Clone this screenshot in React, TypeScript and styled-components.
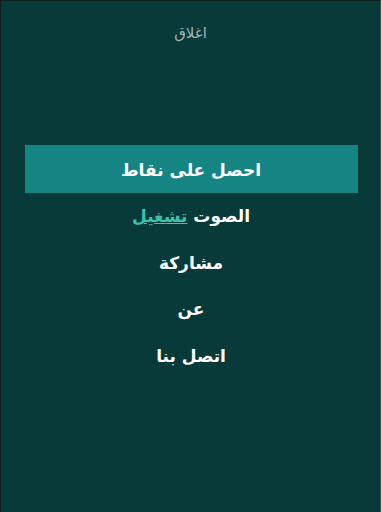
import styled, {createGlobalStyle} from "styled-components";

const GlobalStyle = createGlobalStyle`
    html, body {
        margin: 0;
        padding: 0;
        background: #083a3a;
    }
    body {
        font-family: "DejaVu Sans", sans-serif;
    }
`

const Screen = styled.div`
    box-sizing: border-box;
    width: 381px;
    height: 512px;
    background: #083a3a;
    border-top: 1px solid #10201f;
    border-left: 1px solid #10201f;
    border-right: 1px solid #3b4d4c;
    direction: rtl;
    display: flex;
    flex-direction: column;
    align-items: center;
`

const CloseButton = styled.button`
    margin-top: 23px;
    background: none;
    border: none;
    padding: 0;
    color: #9fb3b1;
    font-family: "DejaVu Sans", sans-serif;
    font-size: 15px;
    cursor: pointer;
`

const Menu = styled.nav`
    margin-top: 103px;
    width: 333px;
    margin-left: 1px;
    display: flex;
    flex-direction: column;
`

const MenuItem = styled.a<{ $active?: boolean }>`
    height: ${p => p.$active ? "48px" : "46.5px"};
    display: flex;
    align-items: center;
    justify-content: center;
    background: ${p => p.$active ? "#148583" : "transparent"};
    color: #ffffff;
    font-size: 17px;
    font-weight: bold;
    text-decoration: none;
    padding-top: ${p => p.$active ? "1px" : "0"};
    box-sizing: border-box;
`

const Toggle = styled.span`
    color: #3cc2ab;
    text-decoration: underline;
    margin-right: 6px;
`

export default function App() {
    return (
        <>
            <GlobalStyle/>
            <Screen>
                <CloseButton>اغلاق</CloseButton>
                <Menu>
                    <MenuItem $active>احصل على نقاط</MenuItem>
                    <MenuItem>الصوت<Toggle>تشغيل</Toggle></MenuItem>
                    <MenuItem>مشاركة</MenuItem>
                    <MenuItem>عن</MenuItem>
                    <MenuItem>اتصل بنا</MenuItem>
                </Menu>
            </Screen>
        </>
    )
}
